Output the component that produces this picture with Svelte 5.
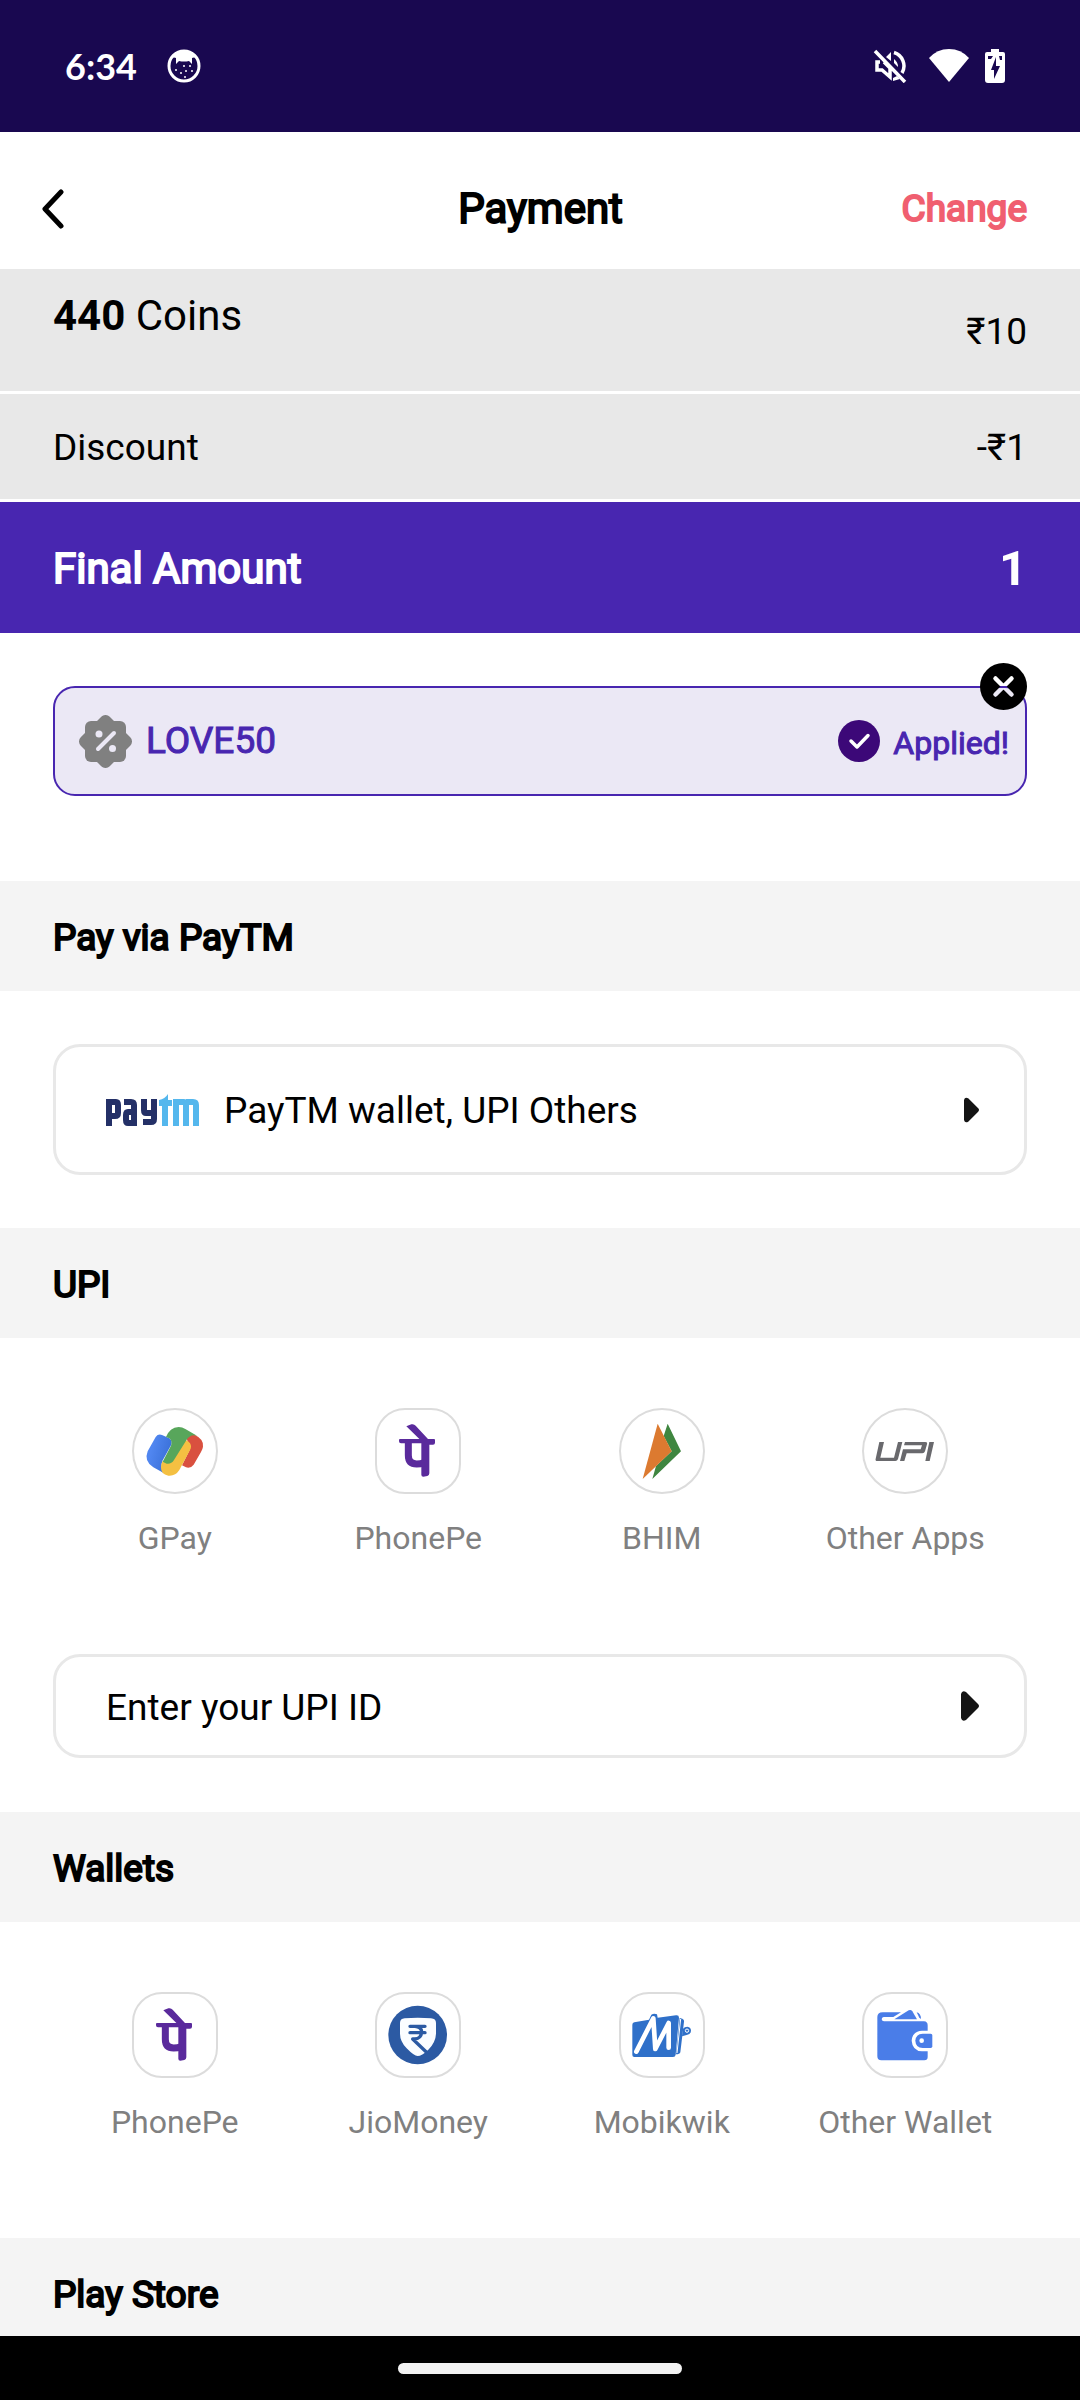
<script>
  const upiApps = [
    { id: 'gpay', label: 'GPay', round: true },
    { id: 'phonepe', label: 'PhonePe', round: false },
    { id: 'bhim', label: 'BHIM', round: true },
    { id: 'upi', label: 'Other Apps', round: true }
  ];
  const wallets = [
    { id: 'phonepe', label: 'PhonePe', round: false },
    { id: 'jio', label: 'JioMoney', round: false },
    { id: 'mobikwik', label: 'Mobikwik', round: false },
    { id: 'wallet', label: 'Other Wallet', round: false }
  ];
</script>

{#snippet logo(id)}
  {#if id === 'gpay'}
    <svg viewBox="102 90 246 246" aria-hidden="true">
      <defs>
        <linearGradient id="gpay-blue" x1="0" y1="0" x2="1" y2="0.4">
          <stop offset="0.3" stop-color="#5086f0" />
          <stop offset="1" stop-color="#3a70d8" />
        </linearGradient>
      </defs>
      <path fill="#d9503f" d="M256 162L285 165Q312 178 309 200Q308 207 303 216L281 254Q272 266 258 262L246 256L270 208Z" />
      <path fill="url(#gpay-blue)" d="M167 171Q174 161 186 165L208 175Q219 183 213 196L187 243Q180 262 191 279L160 262Q131 244 143 214Z" />
      <path fill="#f4c042" d="M256 179L266 185Q276 194 272 206L238 270Q226 289 205 287Q182 283 183 262Q183 252 188 243L222 236Z" />
      <path fill="#58a65b" d="M198 171Q209 143 236 141Q247 141 256 147L291 167Q271 161 260 179L222 240Q214 253 200 251L188 245L213 197Q218 183 208 175Z" />
    </svg>
  {:else if id === 'phonepe'}
    <svg viewBox="831 90 246 246" aria-hidden="true">
      <path fill="#5a2a9c" d="M919 139L934 133Q942 131 947 137L986 179L962 181Z" />
      <path fill="#5a2a9c" d="M900 177H1002Q1005 177 1005 180V188Q1005 194 999 194H988V280Q988 286 982 288L970 290Q964 290 964 284V190H903Q897 190 897 184V180Q897 177 900 177Z" />
      <path fill="none" stroke="#5a2a9c" stroke-width="21" d="M925 186V226Q925 252 950 252Q962 252 972 248" />
    </svg>
  {:else if id === 'bhim'}
    <svg viewBox="123 90 246 246" aria-hidden="true">
      <path fill="#3f8640" d="M263 131L303 214L217 297L228 258L275 214L251 168Z" />
      <path fill="#dc7a30" d="M233 131L275 214L188 297Z" />
    </svg>
  {:else if id === 'upi'}
    <svg viewBox="852 90 246 246" aria-hidden="true">
      <g fill="#69696d">
        <path d="M898 186H912L901 233H942L954 186H967L954 237Q952 243 946 243H892Q885 243 887 236Z" />
        <path d="M975 186H1036Q1043 186 1041 193L1035 214Q1033 220 1027 220H980L973 243H960L969 208H1022L1026 196H972Z" />
        <path d="M1048 186H1062L1049 243H1036Z" />
      </g>
    </svg>
  {:else if id === 'jio'}
    <svg viewBox="831 90 246 246" aria-hidden="true">
      <g transform="translate(0 -13)">
        <circle cx="953" cy="226" r="88" fill="#2c5aa3" />
        <path fill="#fbfdff" d="M914 176Q953 172 993 176Q1008 177 1008 190V222Q1007 248 985 270Q965 289 953 289Q942 289 920 266Q900 245 900 222V190Q900 177 914 176Z" />
        <path fill="none" stroke="#2c5aa3" stroke-width="10" stroke-linecap="round" stroke-linejoin="round" d="M930 200H975M930 219H975M945 200Q966 202 965 218Q963 236 945 238H938L978 276" />
      </g>
    </svg>
  {:else if id === 'mobikwik'}
    <svg viewBox="123 103 246 246" aria-hidden="true">
      <g fill="#2f70c9">
        <path d="M157 195Q157 189 163 188L207 180L214 165Q222 160 231 164L233 174L288 167Q297 166 297 174L287 285Q286 292 279 292H163Q157 292 157 286Z" />
        <path d="M299 175L307 177Q313 179 312 186L301 278Q299 284 288 284Z" />
        <path d="M309 207Q314 201 322 201Q333 203 333 213Q332 225 320 226L306 230Z" />
      </g>
      <path fill="none" stroke="#fff" stroke-width="14" stroke-linecap="round" stroke-linejoin="round" d="M169 276L220 176L226 268L266 190V264" />
      <path fill="none" stroke="#fff" stroke-width="3" d="M302 178L291 280" />
      <circle cx="321" cy="213" r="5" fill="none" stroke="#fff" stroke-width="3" />
    </svg>
  {:else}
    <svg viewBox="852 103 246 246" aria-hidden="true">
      <g fill="#4a7de8">
        <path d="M892 172Q892 158 908 158H963L940 172H911Q905 173 905 179Q906 185 912 185H1032Q1043 186 1043 197V213H1026Q997 215 995 243Q997 273 1026 275H1043V292Q1043 302 1033 302H904Q892 302 892 290Z" />
        <path d="M943 179L986 152Q993 149 997 155L1011 179Z" />
        <path d="M1010 158Q1023 161 1023 178L1018 174Z" />
        <path d="M1028 222H1052Q1057 222 1057 227V260Q1057 265 1052 265H1028Q1007 264 1006 243Q1007 223 1028 222Z" />
      </g>
      <circle cx="1025" cy="243" r="7" fill="#fff" />
    </svg>
  {/if}
{/snippet}

{#snippet options(items)}
  <div class="options">
    {#each items as item}
      <button class="option" type="button">
        <span class="tile" class:round={item.round}>{@render logo(item.id)}</span>
        <span>{item.label}</span>
      </button>
    {/each}
  </div>
{/snippet}

<div class="screen">
  <div class="status">
    <time>6:34</time>
    <svg class="face" viewBox="0 0 34 34" aria-hidden="true">
      <circle cx="17" cy="17" r="15" fill="none" stroke="#fff" stroke-width="3" />
      <path fill="#fff" d="M5 8Q10 1 17 1T29 8L25 9L25 15L22 12Q17 13 12 12L9 15L9 9Z" />
      <g fill="#fff"><circle cx="9" cy="21" r="1" /><circle cx="19" cy="22" r="1" /><circle cx="14" cy="24" r="1" /><circle cx="23" cy="17" r="1" /><circle cx="25" cy="22" r="1" /><circle cx="17" cy="17" r="1" /><circle cx="18" cy="28" r="1" /></g>
    </svg>
    <span class="spacer"></span>
    <svg class="mute" viewBox="0 0 34 34" aria-hidden="true">
      <path fill="none" stroke="#fff" stroke-width="3.500" d="M2 2L32 33M21 3.500A14 14 0 0 1 29 24M7 13H4V21H9L17 28V19L11 13" />
      <path fill="#fff" d="M18 3V12L13 8ZM21 10Q25 13 25 18L21 14ZM20 29L24 27L27 30L20 32Z" />
    </svg>
    <svg class="wifi" viewBox="0 0 40 34" aria-hidden="true"><path fill="#fff" d="M0 9Q8 0 20 0T40 9L20 33Z" /></svg>
    <svg class="battery" viewBox="0 0 20 34" aria-hidden="true">
      <path fill="#fff" d="M6 0H14V3H18Q20 3 20 5V31Q20 34 17 34H3Q0 34 0 31V5Q0 3 2 3H6Z" />
      <path fill="#190850" d="M3 7H8L6 10H3ZM14 7H17V11H15ZM11 8V17H15L9 30V21H6Z" />
    </svg>
  </div>

  <header class="bar">
    <button class="back" type="button" aria-label="Back">
      <svg viewBox="0 0 22 40" aria-hidden="true"><path fill="none" stroke="#000" stroke-width="5" stroke-linecap="round" stroke-linejoin="round" d="M19 3L3 20L19 37" /></svg>
    </button>
    <h1>Payment</h1>
    <button class="change" type="button">Change</button>
  </header>

  <main>
    <div class="row coins"><span class="amount"><b>440</b> Coins</span><span>₹10</span></div>
    <div class="row"><span>Discount</span><span>-₹1</span></div>
    <div class="row final"><span class="amount">Final Amount</span><strong>1</strong></div>

    <div class="coupon">
      <svg class="badge" viewBox="0 0 53 53" aria-hidden="true">
        <g fill="#808080">
          <rect x="6" y="6" width="41" height="41" rx="6" />
          <rect x="6" y="6" width="41" height="41" rx="6" transform="rotate(45 26.500 26.500)" />
        </g>
        <g fill="#ebe8f5"><circle cx="20" cy="19" r="3.500" /><circle cx="33.500" cy="33.500" r="3.500" /></g>
        <path stroke="#ebe8f5" stroke-width="4" stroke-linecap="round" d="M19 34L35 18" />
      </svg>
      <span class="code">LOVE50</span>
      <svg class="tick" viewBox="0 0 42 42" aria-hidden="true">
        <circle cx="21" cy="21" r="21" fill="#3c0878" />
        <path fill="none" stroke="#fff" stroke-width="3.500" stroke-linecap="round" stroke-linejoin="round" d="M13 21L19 27L30 15.500" />
      </svg>
      <span class="applied">Applied!</span>
      <button class="remove" type="button" aria-label="Remove coupon">
        <svg viewBox="0 0 47 47" aria-hidden="true">
          <mask id="cross">
            <rect width="47" height="47" fill="#fff" />
            <path stroke="#000" stroke-width="4.500" stroke-linecap="round" d="M15.500 15.500L31.500 31.500M31.500 15.500L15.500 31.500" />
          </mask>
          <circle cx="23.500" cy="23.500" r="23.500" mask="url(#cross)" />
        </svg>
      </button>
    </div>

    <h2>Pay via PayTM</h2>
    <button class="card tall" type="button">
      <svg class="paytm" viewBox="0 0 93 32" aria-hidden="true">
        <g fill="none" stroke="#243067" stroke-width="6">
          <path d="M3 32V8H10Q12 8 12 11V19Q12 22 9 22H3" />
          <path d="M18 8H25Q28 8 28 11V29H22Q20 29 20 26V21Q20 18 22 18H28" />
          <path d="M38 5V16Q38 19 40 19H48M48 5V25Q48 28 45 28H37" />
        </g>
        <path fill="#54b7ed" d="M62 0Q59 5 53 6V12H56V32H62V12H66V6H62Z" />
        <path fill="none" stroke="#54b7ed" stroke-width="6" d="M70 32V8H78Q80 8 80 11V32M80 8H87Q90 8 90 11V32" />
      </svg>
      <span>PayTM wallet, UPI Others</span>
      <svg class="arrow small" viewBox="0 0 18 30" aria-hidden="true"><path fill="#141414" d="M0 3Q1-1 5 1L17 13Q19 15 17 17L5 29Q1 31 0 27Z" /></svg>
    </button>

    <h2>UPI</h2>
    {@render options(upiApps)}
    <button class="card" type="button">
      <span>Enter your UPI ID</span>
      <svg class="arrow" viewBox="0 0 18 30" aria-hidden="true"><path fill="#141414" d="M0 3Q1-1 5 1L17 13Q19 15 17 17L5 29Q1 31 0 27Z" /></svg>
    </button>

    <h2>Wallets</h2>
    {@render options(wallets)}

    <h2>Play Store</h2>
  </main>

  <nav><span class="pill"></span></nav>
</div>

<style>
  :global(body) { margin: 0; background: #fff; }
  .screen {
    display: flex;
    flex-direction: column;
    height: 100vh;
    overflow: hidden;
    background: #fff;
    color: #000;
    font-family: Roboto, sans-serif;
    font-size: 37px;
    line-height: 44px;
  }
  svg { display: block; flex: none; }
  button {
    margin: 0;
    padding: 0;
    border: 0;
    background: none;
    color: inherit;
    font: inherit;
    cursor: pointer;
  }
  .status {
    display: flex;
    flex: none;
    align-items: center;
    height: 132px;
    padding: 0 75px 0 65px;
    box-sizing: border-box;
    background: #190850;
    color: #fff;
  }
  time { font-family: Lato, sans-serif; font-size: 36px; font-weight: 700; }
  .face { width: 34px; height: 34px; margin-left: 30px; }
  .spacer { flex: 1; }
  .mute { width: 34px; height: 34px; }
  .wifi { width: 40px; height: 34px; margin: 0 16px 0 22px; }
  .battery { width: 20px; height: 34px; }
  .bar {
    display: grid;
    flex: none;
    grid-template-columns: 1fr auto 1fr;
    align-items: center;
    height: 137px;
    padding: 17px 53px 0 42px;
    box-sizing: border-box;
  }
  .back { justify-self: start; }
  .back svg { width: 22px; height: 40px; }
  h1 {
    margin: 0;
    padding-left: 12px;
    font-size: 42px;
    font-weight: 400;
    -webkit-text-stroke: 2px currentColor;
  }
  .change {
    justify-self: end;
    color: #f05f70;
    -webkit-text-stroke: 2px currentColor;
  }
  main {
    flex: 1;
    min-height: 0;
    overflow-y: auto;
    scrollbar-width: none;
  }
  .row {
    display: flex;
    align-items: center;
    justify-content: space-between;
    height: 105px;
    padding: 3px 53px 0;
    margin-bottom: 3px;
    box-sizing: border-box;
    background: #e8e8e8;
  }
  .row.coins { height: 122px; }
  .amount { font-size: 42px; }
  .coins .amount { padding-bottom: 32px; }
  .row.final {
    height: 131px;
    margin-bottom: 0;
    background: #4826b0;
    color: #fff;
  }
  .final .amount { -webkit-text-stroke: 2px currentColor; }
  .final strong { font-size: 49px; }
  .coupon {
    position: relative;
    display: flex;
    align-items: center;
    height: 110px;
    margin: 53px 53px 85px;
    padding: 0 16px 0 24px;
    box-sizing: border-box;
    border: 2px solid #4826b0;
    border-radius: 22px;
    background: #ebe8f5;
    color: #4826b0;
  }
  .badge { width: 53px; height: 53px; margin-right: 14px; }
  .code { flex: 1; -webkit-text-stroke: 1px currentColor; }
  .tick { width: 42px; height: 42px; margin-right: 13px; }
  .applied { padding-top: 3px; font-size: 32px; -webkit-text-stroke: 1px currentColor; }
  .remove { position: absolute; top: -25px; right: -2px; }
  .remove svg { width: 47px; height: 47px; }
  h2 {
    display: flex;
    align-items: center;
    height: 110px;
    margin: 0;
    padding: 3px 53px 0;
    box-sizing: border-box;
    background: #f4f4f4;
    font-size: 37px;
    font-weight: 400;
    -webkit-text-stroke: 2px currentColor;
  }
  .card {
    display: flex;
    align-items: center;
    width: calc(100% - 106px);
    height: 104px;
    margin: 0 53px 54px;
    padding: 0 45px 0 50px;
    box-sizing: border-box;
    border: 3px solid #e8e8e8;
    border-radius: 27px;
  }
  .card.tall { height: 131px; margin: 53px; }
  .card span { flex: 1; padding-top: 3px; text-align: left; }
  .paytm { width: 93px; height: 32px; margin-right: 25px; }
  .arrow { width: 18px; height: 30px; }
  .arrow.small { width: 15px; height: 26px; }
  .options {
    display: grid;
    grid-template-columns: repeat(4, 1fr);
    padding: 70px 53px 95px;
  }
  .option {
    display: flex;
    flex-direction: column;
    align-items: center;
    gap: 24px;
    color: #808080;
    font-size: 32px;
    line-height: 41px;
  }
  .tile {
    width: 86px;
    height: 86px;
    box-sizing: border-box;
    border: 2px solid #dcdcdc;
    border-radius: 30px;
  }
  .tile.round { border-radius: 50%; }
  nav {
    display: flex;
    flex: none;
    align-items: center;
    justify-content: center;
    height: 64px;
    background: #000;
  }
  .pill { width: 284px; height: 11px; border-radius: 6px; background: #f2f2f2; }
</style>
